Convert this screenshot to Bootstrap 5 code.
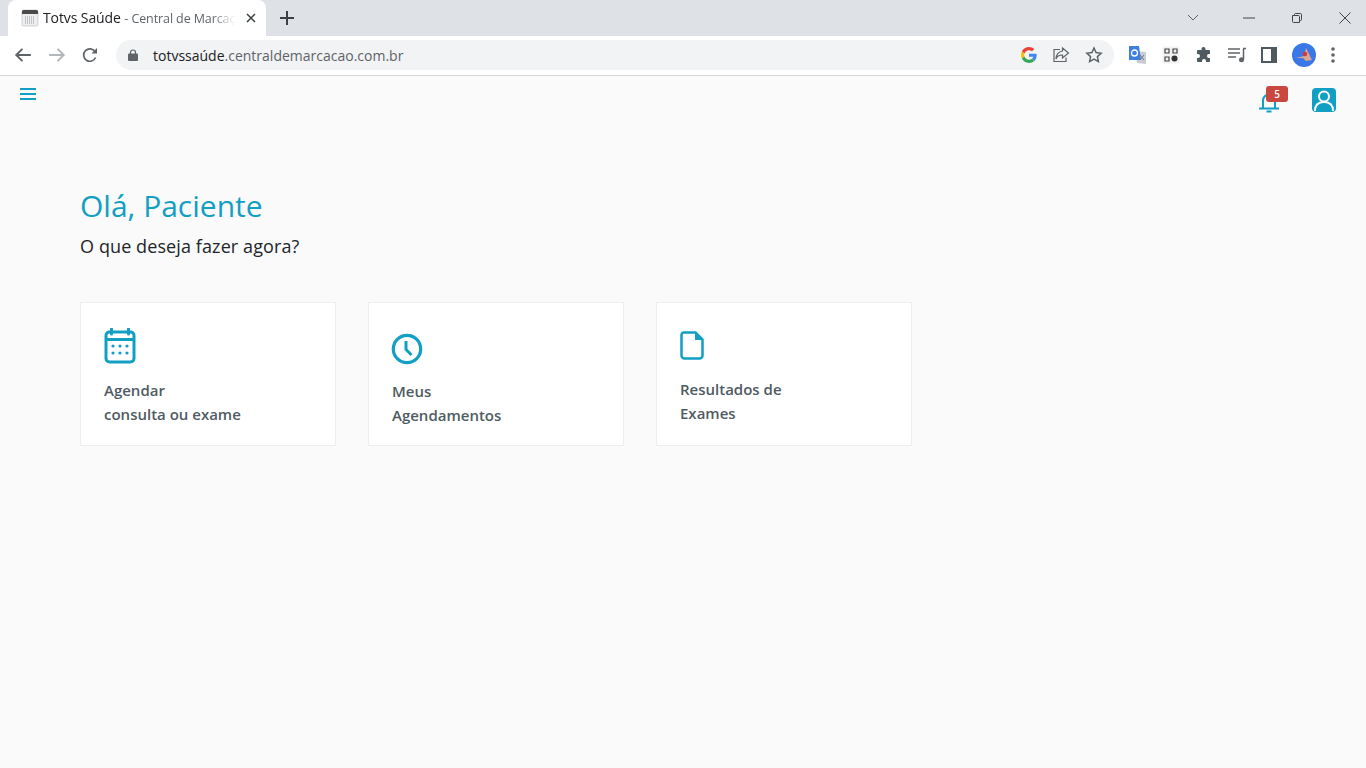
<!DOCTYPE html>
<html lang="pt-BR">
<head>
<meta charset="utf-8">
<title>Totvs Saúde - Central de Marcação</title>
<link href="https://cdn.jsdelivr.net/npm/bootstrap@5.3.0/dist/css/bootstrap.min.css" rel="stylesheet">
<style>
html,body{height:100%;}
body{background:#fafafa;font-family:"Open Sans","Noto Sans",sans-serif;overflow:hidden;}
.tabstrip{height:36px;background:#dee1e6;padding-left:8px;}
.tabitem{width:258px;height:36px;background:#fff;border-radius:8px 8px 0 0;padding:0 10px 0 13px;font-size:14px;color:#202124;}
.tabtext{width:192px;white-space:nowrap;overflow:hidden;letter-spacing:-.1px;-webkit-mask-image:linear-gradient(90deg,#000 88%,transparent);mask-image:linear-gradient(90deg,#000 88%,transparent);}
.tabtext span{color:#5f6368;font-size:12.5px;}
.newtab{margin-left:14px;}
.winbtns{margin-left:auto;padding-right:15px;gap:28px;}
.toolbar{height:40px;background:#fff;border-bottom:1px solid #d5d7da;padding:0 12px 1px 14px;}
.navicons{gap:16px;width:102px;}
.omnibox{width:998px;height:30px;background:#f1f3f4;border-radius:15px;padding:0 11px 0 12px;font-size:14px;color:#5f6368;margin-left:0;}
.omnibox b{font-weight:400;color:#202124;}
.urltext{margin-left:15px;}
.omniright{margin-left:auto;gap:15px;}
.exts{margin-left:14px;gap:15px;}
.avatar{width:24px;height:24px;}
.pagebar{height:44px;padding:0 30px 0 20px;}
.bellwrap{position:relative;width:20px;height:22px;margin-right:33px;margin-top:3px;}
.countbadge{position:absolute;left:7px;top:-3px;width:22px;height:16px;background:#c9473f;color:#fff;border-radius:3px;font-size:10px;font-weight:600;text-align:center;line-height:16px;}
.userbtn{width:24px;height:24px;background:#119fc3;border-radius:4px;margin-top:3px;}
.maincontent{padding:64px 0 0 80px;}
.hello{color:#119fc3;font-size:30px;font-weight:400;line-height:44px;margin:0;}
.subhello{color:#212529;font-size:18px;line-height:28px;margin:4px 0 0;letter-spacing:.1px;}
.cardgrid{margin-top:42px;gap:32px;}
.actioncard{width:256px;height:144px;background:#fff;border:1px solid #eeeeee;border-radius:0;padding:24px 23px;}
.cardlabel{color:#4f5b62;font-size:15px;font-weight:600;line-height:24px;margin:0;}
.ic-cal{display:block;margin:1px 0 14px 0;}
.ic-clock{display:block;margin:6px 0 14px -1px;}
.ic-doc{display:block;margin:4px 0 17px 0;}
</style>
</head>
<body>
<div class="tabstrip d-flex align-items-center">
  <div class="tabitem d-flex align-items-center">
    <svg width="18" height="18" viewBox="0 0 18 18" class="me-1 flex-shrink-0"><rect x="1" y="1" width="16" height="16" rx="1.5" fill="#eceef0" stroke="#bbb" stroke-width=".6"/><path d="M1 2.5A1.5 1.5 0 0 1 2.500 1h13A1.500 1.500 0 0 1 17 2.500V5H1z" fill="#4a4a4a"/><path d="M4 8h10M4 10h10M4 12h10M4 14h10" stroke="#9a9a9a" stroke-width="1" stroke-dasharray="1 1"/></svg>
    <div class="tabtext">Totvs Saúde <span>- Central de Marcação</span></div>
    <svg width="10" height="10" viewBox="0 0 10 10" class="ms-auto"><path d="M1 1l8 8M9 1l-8 8" stroke="#3c4043" stroke-width="1.500"/></svg>
  </div>
  <svg class="newtab" width="14" height="14" viewBox="0 0 14 14"><path d="M7 0v14M0 7h14" stroke="#3c4043" stroke-width="2"/></svg>
  <div class="winbtns d-flex align-items-center">
    <svg width="12" height="8" viewBox="0 0 12 8"><path d="M1 1l5 5 5-5" fill="none" stroke="#5f6368" stroke-width="1"/></svg>
    <svg class="ms-3" width="12" height="2" viewBox="0 0 12 2"><path d="M0 1h12" stroke="#444" stroke-width="1"/></svg>
    <svg class="ms-2" width="12" height="12" viewBox="0 0 12 12"><path d="M1.500 3.500h6a1 1 0 0 1 1 1v6h-6a1 1 0 0 1-1-1z M3.500 3.500v-1a1 1 0 0 1 1-1h5a1 1 0 0 1 1 1v5a1 1 0 0 1-1 1h-1" fill="none" stroke="#444" stroke-width="1"/></svg>
    <svg class="ms-2" width="12" height="12" viewBox="0 0 12 12"><path d="M.5.500l11 11M11.500.500l-11 11" stroke="#444" stroke-width="1"/></svg>
  </div>
</div>
<div class="toolbar d-flex align-items-center">
  <div class="navicons d-flex align-items-center flex-shrink-0">
    <svg width="18" height="16" viewBox="0 0 16 14"><path d="M15 7H2M7.500 1.500L2 7l5.500 5.500" fill="none" stroke="#5f6368" stroke-width="1.700"/></svg>
    <svg width="18" height="16" viewBox="0 0 16 14"><path d="M1 7h13M8.500 1.500L14 7l-5.500 5.500" fill="none" stroke="#b3b6ba" stroke-width="1.700"/></svg>
    <svg width="16" height="16" viewBox="0 0 16 16"><path d="M13.600 10.500A6.200 6.200 0 1 1 13 4.500" fill="none" stroke="#5f6368" stroke-width="1.700"/><path d="M15 1v5.500H9.500z" fill="#5f6368"/></svg>
  </div>
  <div class="omnibox d-flex align-items-center flex-shrink-0">
    <svg width="10" height="12" viewBox="0 0 10 12"><path d="M2.500 5V3.500a2.500 2.500 0 0 1 5 0V5" fill="none" stroke="#5f6368" stroke-width="1.200"/><rect y="4.500" width="10" height="7.500" rx="1" fill="#5f6368"/></svg>
    <span class="urltext"><b>totvssaúde</b>.centraldemarcacao.com.br</span>
    <div class="omniright d-flex align-items-center">
      <svg width="16" height="16" viewBox="0 0 48 48"><path fill="#EA4335" d="M24 9.500c3.500 0 6.700 1.200 9.200 3.600l6.900-6.900C35.900 2.400 30.500 0 24 0 14.600 0 6.500 5.400 2.600 13.200l8 6.200C12.500 13.700 17.800 9.500 24 9.500z"/><path fill="#4285F4" d="M47 24.500c0-1.600-.2-3.100-.4-4.500H24v9h12.900c-.6 3-2.200 5.500-4.700 7.200l7.700 6c4.500-4.200 7.100-10.300 7.100-17.700z"/><path fill="#FBBC05" d="M10.500 28.600c-.5-1.400-.8-3-.8-4.600s.3-3.200.8-4.600l-8-6.200C.9 16.500 0 20.100 0 24s.9 7.500 2.600 10.800z"/><path fill="#34A853" d="M24 48c6.500 0 11.900-2.100 15.900-5.800l-7.700-6c-2.100 1.400-4.900 2.300-8.200 2.300-6.300 0-11.500-4.200-13.400-9.900l-8 6.200C6.500 42.600 14.600 48 24 48z"/></svg>
      <svg width="18" height="18" viewBox="0 0 18 18"><path d="M8 3.500H2v12h12v-4" fill="none" stroke="#5f6368" stroke-width="1.200"/><path d="M10.500 2l6 5-6 5V9C7 9 5 10 4 13c0-4 2.500-7.500 6.500-8z" fill="none" stroke="#5f6368" stroke-width="1.200"/></svg>
      <svg width="18" height="18" viewBox="0 0 18 18"><path d="M9 2l2.100 4.600 5 .6-3.700 3.400 1 5L9 13.100l-4.400 2.500 1-5L1.900 7.200l5-.6z" fill="none" stroke="#5f6368" stroke-width="1.500"/></svg>
    </div>
  </div>
  <div class="exts d-flex align-items-center">
    <svg width="19" height="19" viewBox="0 0 19 19"><path d="M7 5l11 1v12l-9-1z" fill="#c9ccd0"/><path d="M1 0h10l2 14H1z" fill="#3f7fe0"/><circle cx="6.500" cy="7" r="3" fill="none" stroke="#fff" stroke-width="1.300"/><path d="M12 9l4 5M16 9l-4 5" stroke="#777" stroke-width="1"/></svg>
    <svg width="18" height="18" viewBox="0 0 18 18"><rect x=".5" y=".5" width="17" height="17" rx="2" fill="#f2f2f2"/><path d="M3 3h4v4H3zM3 11h4v4H3zM11 3h4v4h-4z" fill="none" stroke="#444" stroke-width="1.200"/><circle cx="12.500" cy="12.500" r="3" fill="#333"/></svg>
    <svg width="18" height="18" viewBox="0 0 18 18"><path d="M6.500 3a2 2 0 0 1 4 0V4H14a1 1 0 0 1 1 1v3h-1a2 2 0 0 0 0 4h1v3a1 1 0 0 1-1 1h-3v-1a2 2 0 0 0-4 0v1H3a1 1 0 0 1-1-1v-3h1a2 2 0 0 0 0-4H2V5a1 1 0 0 1 1-1h3.500z" fill="#4f5a60"/></svg>
    <svg width="18" height="16" viewBox="0 0 18 16"><path d="M0 2h12M0 6h12M0 10h8" stroke="#5f6368" stroke-width="1.500"/><path d="M15.500 2v10.500" stroke="#5f6368" stroke-width="1.500"/><circle cx="13.500" cy="12.800" r="2.500" fill="#5f6368"/><path d="M15 1.500h3" stroke="#5f6368" stroke-width="1.500"/></svg>
    <svg width="16" height="16" viewBox="0 0 16 16"><path fill-rule="evenodd" d="M0 0h16v16H0zM2 2v12h8V2z" fill="#4f5a60"/><rect x="10" y="2" width="4" height="12" fill="#4f5a60"/></svg>
    <svg class="avatar" viewBox="0 0 24 24"><circle cx="12" cy="12" r="12" fill="#3b78e7"/><path d="M4 15l8-2 2-8 6 12-6 1-3-3z" fill="#d9a68f"/><circle cx="13" cy="11" r="2.200" fill="#d33"/></svg>
    <svg width="4" height="16" viewBox="0 0 4 16"><circle cx="2" cy="2" r="1.800" fill="#5f6368"/><circle cx="2" cy="8" r="1.800" fill="#5f6368"/><circle cx="2" cy="14" r="1.800" fill="#5f6368"/></svg>
  </div>
</div>
<div class="pagebar d-flex align-items-center">
  <svg width="16" height="12" viewBox="0 0 16 12" class="mb-2"><path d="M0 1h16M0 6h16M0 11h16" stroke="#119fc3" stroke-width="2"/></svg>
  <div class="ms-auto d-flex align-items-center">
    <div class="bellwrap">
      <svg width="20" height="22" viewBox="0 0 20 22"><path d="M4 17V9.500a6 6 0 0 1 12 0V17" fill="none" stroke="#119fc3" stroke-width="2"/><path d="M0 17.500h20" stroke="#119fc3" stroke-width="2"/><path d="M7.500 20.500h5" stroke="#119fc3" stroke-width="2"/></svg>
      <span class="countbadge">5</span>
    </div>
    <div class="userbtn d-flex">
      <svg width="24" height="24" viewBox="0 0 24 24"><circle cx="12" cy="8.500" r="5" fill="none" stroke="#fff" stroke-width="2"/><path d="M3 23c0-6 3.500-9 9-9s9 3 9 9" fill="none" stroke="#fff" stroke-width="2"/></svg>
    </div>
  </div>
</div>
<main class="maincontent">
  <h1 class="hello">Olá, Paciente</h1>
  <p class="subhello">O que deseja fazer agora?</p>
  <div class="cardgrid d-flex">
    <a class="actioncard d-block text-decoration-none">
      <svg class="ic-cal" width="32" height="36" viewBox="0 0 32 36"><path d="M7.500 1v5M24.500 1v5" stroke="#119fc3" stroke-width="3" stroke-linecap="round"/><rect x="2" y="4" width="28" height="30" rx="3.500" fill="none" stroke="#119fc3" stroke-width="3"/><path d="M2 11.500h28" stroke="#119fc3" stroke-width="3"/><g fill="#119fc3"><circle cx="9" cy="18" r="1.600"/><circle cx="16" cy="18" r="1.600"/><circle cx="23" cy="18" r="1.600"/><circle cx="9" cy="25" r="1.600"/><circle cx="16" cy="25" r="1.600"/><circle cx="23" cy="25" r="1.600"/></g></svg>
      <p class="cardlabel">Agendar<br>consulta ou exame</p>
    </a>
    <a class="actioncard d-block text-decoration-none">
      <svg class="ic-clock" width="32" height="32" viewBox="0 0 32 32"><circle cx="16" cy="16" r="13.700" fill="none" stroke="#119fc3" stroke-width="3.200"/><path d="M15 8v8.500l5.500 5.500" fill="none" stroke="#119fc3" stroke-width="3"/></svg>
      <p class="cardlabel">Meus<br>Agendamentos</p>
    </a>
    <a class="actioncard d-block text-decoration-none">
      <svg class="ic-doc" width="24" height="29" viewBox="0 0 24 29"><path d="M4 1.500h11.500l7 7V24.500a3 3 0 0 1-3 3H4.500a3 3 0 0 1-3-3V4a2.500 2.500 0 0 1 2.500-2.500z" fill="none" stroke="#119fc3" stroke-width="2.500"/><path d="M15 2v7h7z" fill="#119fc3"/></svg>
      <p class="cardlabel">Resultados de<br>Exames</p>
    </a>
  </div>
</main>
<script src="https://cdn.jsdelivr.net/npm/bootstrap@5.3.0/dist/js/bootstrap.bundle.min.js"></script>
</body>
</html>
